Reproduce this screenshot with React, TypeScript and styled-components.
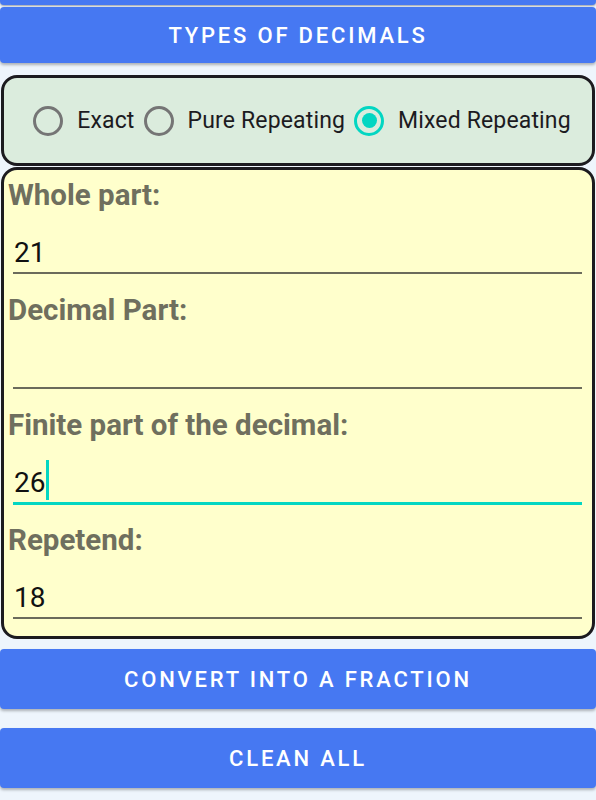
import React from "react";
import styled, { createGlobalStyle } from "styled-components";

const GlobalStyle = createGlobalStyle`
  html, body {
    margin: 0;
    padding: 0;
    background: #eef5fc;
    font-family: Roboto, "Noto Sans", "Liberation Sans", sans-serif;
  }
`;

const Page = styled.div`
  width: 596px;
  height: 800px;
  overflow: hidden;
  background: #eef5fc;
  display: flex;
  flex-direction: column;
`;

const CutButton = styled.div`
  height: 5px;
  background: #4678f2;
  border-radius: 0 0 4px 4px;
  box-shadow: 0 1px 2px rgba(0, 0, 0, 0.35);
`;

const ActionButton = styled.button<{ h: number; mt: number }>`
  height: ${(p) => p.h}px;
  margin-top: ${(p) => p.mt}px;
  width: 100%;
  border: none;
  border-radius: 4px;
  background: #4678f2;
  color: #ffffff;
  font-family: Roboto, sans-serif;
  font-weight: 500;
  font-size: 22px;
  letter-spacing: 2.8px;
  text-transform: uppercase;
  box-shadow: 0 2px 3px rgba(0, 0, 0, 0.28);
  cursor: pointer;
  flex-shrink: 0;
`;

const RadioPanel = styled.div`
  margin: 12px 1px 0;
  height: 85px;
  padding-left: 8px;
  border: 3px solid #1c1b1f;
  border-radius: 16px;
  background: #dbecdd;
  display: flex;
  align-items: center;
  justify-content: center;
  flex-shrink: 0;
`;

const RadioItem = styled.label`
  display: flex;
  align-items: center;
  margin-right: 9px;
  &:last-child {
    margin-right: 0;
  }
`;

const RadioCircle = styled.span<{ checked?: boolean }>`
  width: 24px;
  height: 24px;
  border-radius: 50%;
  border: 3px solid ${(p) => (p.checked ? "#03d6c2" : "#757575")};
  display: flex;
  align-items: center;
  justify-content: center;
  margin-right: 14px;
  &::after {
    content: "";
    display: ${(p) => (p.checked ? "block" : "none")};
    width: 15px;
    height: 15px;
    border-radius: 50%;
    background: #03d6c2;
  }
`;

const RadioText = styled.span`
  font-size: 23px;
  letter-spacing: 0.15px;
  color: #1c1b1f;
`;

const FormPanel = styled.div`
  margin: 1px 1px 0;
  border: 3px solid #1c1b1f;
  border-radius: 16px;
  background: #ffffcc;
  padding: 9px 10px 17px 4px;
  display: flex;
  flex-direction: column;
  gap: 20px;
  flex-shrink: 0;
`;

const Field = styled.div`
  display: flex;
  flex-direction: column;
`;

const Label = styled.div`
  font-size: 29.5px;
  line-height: 32px;
  font-weight: 700;
  color: #6f6f5e;
`;

const InputLine = styled.div<{ focused?: boolean }>`
  margin: 25px 0 0 5px;
  height: 36px;
  padding-left: 1px;
  display: flex;
  align-items: flex-start;
  font-size: 28px;
  line-height: 33px;
  color: #111111;
  border-bottom: ${(p) => (p.focused ? "3px solid #03d6c2" : "2px solid #6b6b5b")};
  margin-bottom: ${(p) => (p.focused ? "-1px" : "0")};
`;

const Caret = styled.span`
  display: inline-block;
  width: 3px;
  height: 40px;
  margin-top: -6px;
  margin-left: 1px;
  background: #03d6c2;
`;

const fields = [
  { label: "Whole part:", value: "21" },
  { label: "Decimal Part:", value: "" },
  { label: "Finite part of the decimal:", value: "26", focused: true },
  { label: "Repetend:", value: "18" },
];

const options = [
  { label: "Exact", checked: false },
  { label: "Pure Repeating", checked: false },
  { label: "Mixed Repeating", checked: true },
];

export default function App() {
  return (
    <>
      <GlobalStyle />
      <Page>
        <CutButton />
        <ActionButton h={56} mt={2}>
          Types of decimals
        </ActionButton>
        <RadioPanel>
          {options.map((o) => (
            <RadioItem key={o.label}>
              <RadioCircle checked={o.checked} />
              <RadioText>{o.label}</RadioText>
            </RadioItem>
          ))}
        </RadioPanel>
        <FormPanel>
          {fields.map((f) => (
            <Field key={f.label}>
              <Label>{f.label}</Label>
              <InputLine focused={f.focused}>
                {f.value}
                {f.focused && <Caret />}
              </InputLine>
            </Field>
          ))}
        </FormPanel>
        <ActionButton h={60} mt={10}>
          Convert into a fraction
        </ActionButton>
        <ActionButton h={60} mt={19}>
          Clean all
        </ActionButton>
      </Page>
    </>
  );
}
